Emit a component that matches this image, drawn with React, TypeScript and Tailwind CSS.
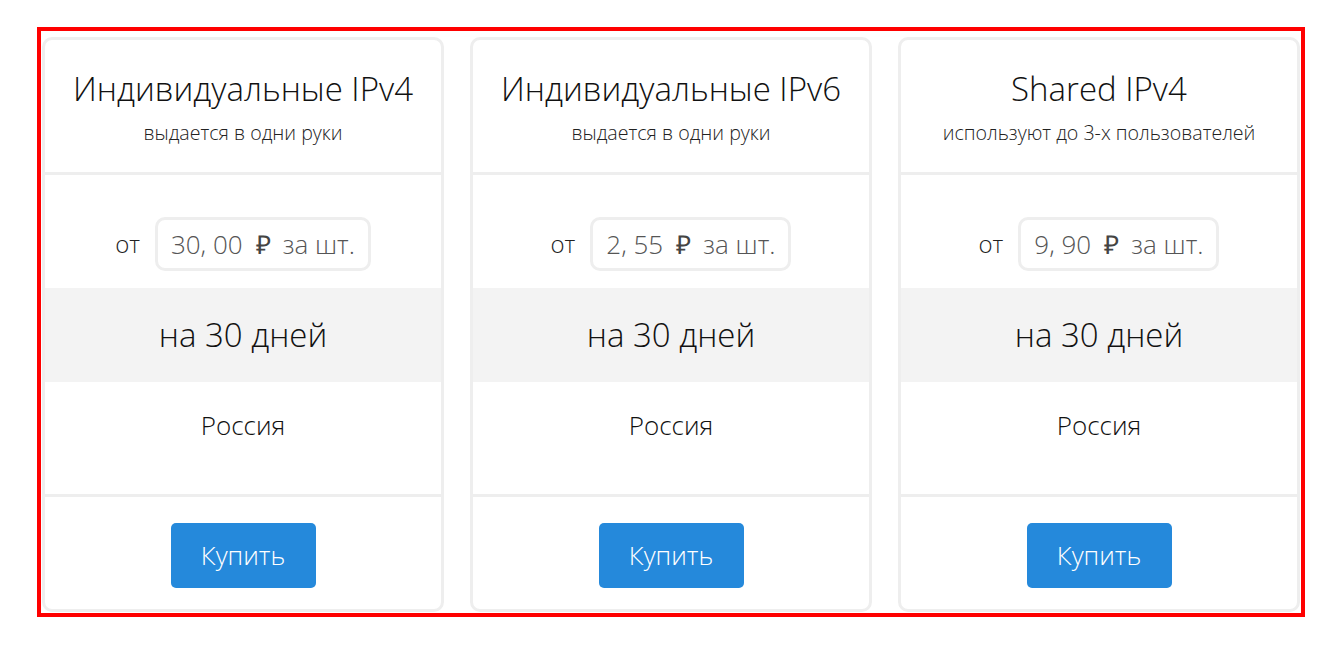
const plans = [
  { title: 'Индивидуальные IPv4', note: 'выдается в одни руки', price: '30, 00' },
  { title: 'Индивидуальные IPv6', note: 'выдается в одни руки', price: '2, 55' },
  { title: 'Shared IPv4', note: 'используют до 3-х пользователей', price: '9, 90' },
];

function PlanCard({ title, note, price }: { title: string; note: string; price: string }) {
  return (
    <div className="w-[402px] h-[575px] border-[3px] border-[#eeeeee] rounded-[10px] flex flex-col overflow-hidden bg-white">
      <div className="h-[135px] border-b-[3px] border-[#eeeeee] flex flex-col items-center pt-[28px]">
        <div className="text-[33px] leading-[42px] font-light text-[#111]">{title}</div>
        <div className="text-[19.6px] leading-[26px] font-light text-[#222] mt-[10px]">{note}</div>
      </div>
      <div className="h-[113px] flex justify-center items-start pt-[42px]">
        <div className="flex items-center gap-[15px]">
          <span className="text-[24px] font-light text-[#222]">от</span>
          <div className="h-[54px] border-[3px] border-[#eeeeee] rounded-[10px] px-[13px] flex items-center text-[26px] font-light text-[#555]">
            <span>{price}</span>
            <span className="ml-[13px] font-normal text-[#444]">₽</span>
            <span className="ml-[12px]">за шт.</span>
          </div>
        </div>
      </div>
      <div className="h-[94px] bg-[#f3f3f3] flex items-center justify-center text-[33px] font-light text-[#111]">
        на 30 дней
      </div>
      <div className="h-[115px] border-b-[3px] border-[#eeeeee] flex justify-center pt-[26px] text-[26px] font-light text-[#111] leading-[34px]">
        Россия
      </div>
      <div className="flex justify-center pt-[26px]">
        <button className="w-[145px] h-[65px] rounded-[5px] bg-[#2589db] text-white text-[26px] font-light">
          Купить
        </button>
      </div>
    </div>
  );
}

export default function App() {
  return (
    <div className="min-h-screen bg-white pt-[27px] pl-[37px] font-['Open_Sans',sans-serif]">
      <div className="w-[1268px] h-[590px] border-4 border-[#ff0000] pt-[6px] pl-px">
        <div className="flex gap-[26px]">
          {plans.map((p) => (
            <PlanCard key={p.title} {...p} />
          ))}
        </div>
      </div>
    </div>
  );
}
